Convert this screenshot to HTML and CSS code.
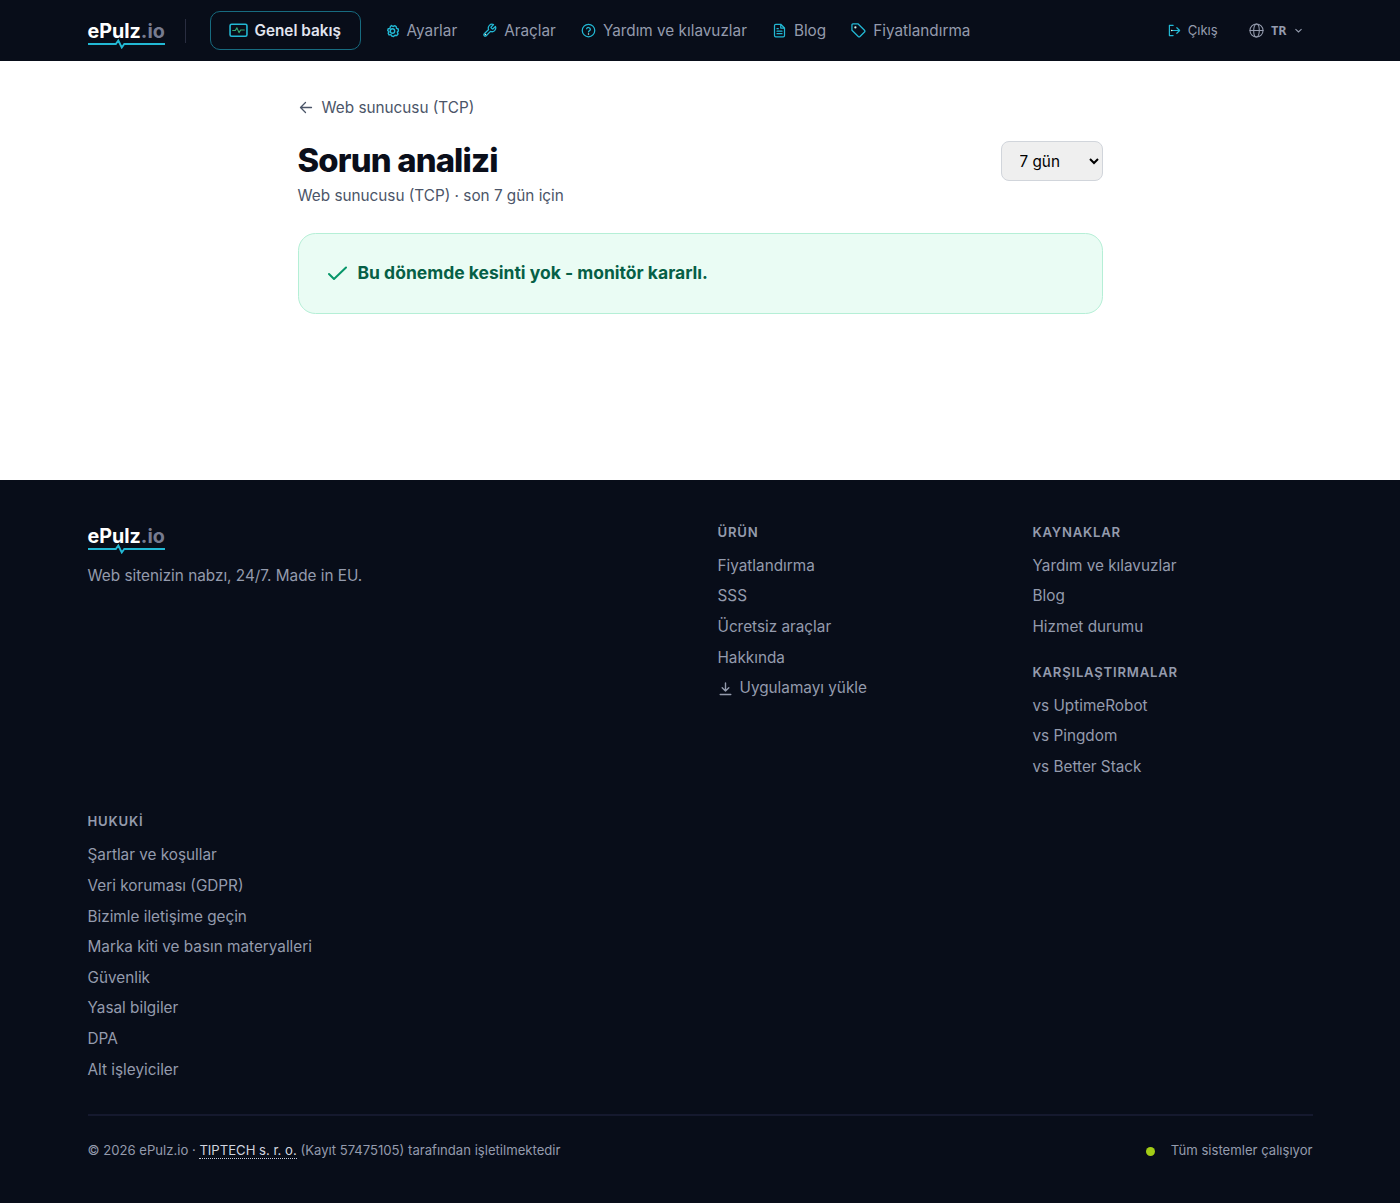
FILE: index.html
```html
<!DOCTYPE html>
<html lang="tr">

<head>
    <meta charset="UTF-8">
    <meta name="viewport" content="width=device-width, initial-scale=1.0">
    <title>Sorun analizi - ePulz.io</title>
    <link rel="stylesheet" href="styles.css">
</head>

<body>

    <!-- Header -->
    <header class="site-header">
        <div class="container header-inner">
            <a href="#" class="logo">
                <span class="logo-text">ePulz<span class="logo-tld">.io</span></span>
                <svg class="logo-pulse" viewBox="0 0 78 10"><path d="M0 5H28L30.500 1.500L34 8.500L36.500 5H78"/></svg>
            </a>
            <span class="divider"></span>
            <nav class="main-nav">
                <a href="#" class="nav-active">
                    <svg class="icon icon-monitor" viewBox="0 0 18 14"><rect x="1" y="1" width="16" height="11.500" rx="1.500"/><path class="beat" d="M3.500 7H6L7.500 4.500L9.500 9L11 6.500H14.500"/></svg>
                    <span>Genel bakış</span>
                </a>
                <a href="#" class="nav-settings">
                    <svg class="icon" viewBox="0 0 14 14"><path d="M5.500 1.500L7 2.500L9 1.700L10.300 2.700L10.500 4.300L12.200 5L12.400 7L11.300 8L12 10L10.700 11.600L9 11.200L7.500 12.500L5.700 12L5 10.700L3 10.900L2.200 9.200L3 7.800L1.700 6.500L2.200 4.800L4 4.500L4.300 2.700Z"/><circle cx="6.500" cy="7" r="2.200"/></svg>
                    <span>Ayarlar</span>
                </a>
                <a href="#">
                    <svg class="icon" viewBox="0 0 24 24"><path d="M14.700 6.300a1 1 0 0 0 0 1.400l1.600 1.600a1 1 0 0 0 1.400 0l3.800-3.800a6 6 0 0 1-7.900 7.900l-6.900 6.900a2.100 2.100 0 0 1-3-3l6.900-6.900a6 6 0 0 1 7.900-7.900z"/><circle class="dot" cx="5.500" cy="18.500" r="1.200"/></svg>
                    <span>Araçlar</span>
                </a>
                <a href="#">
                    <svg class="icon" viewBox="0 0 24 24"><circle cx="12" cy="12" r="10"/><path d="M9 9.200a3.100 3.100 0 0 1 6 1c0 2-3 2.300-3 4.100"/><circle class="dot" cx="12" cy="17.500" r="1.200"/></svg>
                    <span>Yardım ve kılavuzlar</span>
                </a>
                <a href="#">
                    <svg class="icon" viewBox="0 0 24 24"><path d="M14 2H6a2 2 0 0 0-2 2v16a2 2 0 0 0 2 2h12a2 2 0 0 0 2-2V8zM14 2v6h6M8 9h2M8 13h8M8 17h8"/></svg>
                    <span>Blog</span>
                </a>
                <a href="#">
                    <svg class="icon" viewBox="0 0 24 24"><path d="M21.600 14.400l-7.200 7.200a2 2 0 0 1-2.800 0L1.500 11.500V3a1.500 1.500 0 0 1 1.500-1.500H11.500l10.100 10.100a2 2 0 0 1 0 2.800z"/><circle class="dot" cx="7" cy="7" r="1.800"/></svg>
                    <span>Fiyatlandırma</span>
                </a>
            </nav>
            <div class="header-right">
                <a href="#" class="logout">
                    <svg class="icon" viewBox="0 0 14 14"><path d="M5.500 1.500H1.500V12.500H5.500M4 7H12.500M9.500 4L12.500 7L9.500 10"/><circle class="dot" cx="4" cy="7" r="0.900"/></svg>
                    <span>Çıkış</span>
                </a>
                <a href="#" class="language">
                    <svg class="icon" viewBox="0 0 24 24"><circle cx="12" cy="12" r="10.500"/><ellipse cx="12" cy="12" rx="4.500" ry="10.500"/><path d="M1.500 12h21"/></svg>
                    <span>TR</span>
                    <svg class="chevron" viewBox="0 0 8 8"><path d="M1.300 2.700L4 5.300L6.700 2.700"/></svg>
                </a>
            </div>
        </div>
    </header>

    <!-- Incident analysis -->
    <main class="page">
        <a href="#" class="back-link">
            <svg class="icon" viewBox="0 0 16 16"><path d="M13.500 7.500H2.500M7.500 2.500L2.500 7.500L7.500 12.500"/></svg>
            <span>Web sunucusu (TCP)</span>
        </a>
        <div class="page-head">
            <div>
                <h1>Sorun analizi</h1>
                <p class="subtitle">Web sunucusu (TCP) · son 7 gün için</p>
            </div>
            <select class="period" aria-label="Dönem">
                <option>7 gün</option>
            </select>
        </div>
        <div class="notice">
            <svg class="icon" viewBox="0 0 20 20"><path d="M1 10L6 15L18 3.500"/></svg>
            <strong>Bu dönemde kesinti yok - monitör kararlı.</strong>
        </div>
    </main>

    <!-- Footer -->
    <footer class="site-footer">
        <div class="container">
            <div class="footer-grid">
                <div class="brand">
                    <a href="#" class="logo">
                        <span class="logo-text">ePulz<span class="logo-tld">.io</span></span>
                        <svg class="logo-pulse" viewBox="0 0 78 10"><path d="M0 5H28L30.500 1.500L34 8.500L36.500 5H78"/></svg>
                    </a>
                    <p>Web sitenizin nabzı, 24/7. Made in EU.</p>
                </div>
                <div>
                    <h2>ÜRÜN</h2>
                    <ul>
                        <li><a href="#">Fiyatlandırma</a></li>
                        <li><a href="#">SSS</a></li>
                        <li><a href="#">Ücretsiz araçlar</a></li>
                        <li><a href="#">Hakkında</a></li>
                        <li><a href="#" class="install"><svg class="icon" viewBox="0 0 16 16"><path d="M7.500 2V10M4.200 6.800L7.500 10L10.800 6.800M2.200 13.500H12.800"/></svg>Uygulamayı yükle</a></li>
                    </ul>
                </div>
                <div>
                    <h2>KAYNAKLAR</h2>
                    <ul>
                        <li><a href="#">Yardım ve kılavuzlar</a></li>
                        <li><a href="#">Blog</a></li>
                        <li><a href="#">Hizmet durumu</a></li>
                    </ul>
                    <h2 class="compare">KARŞILAŞTIRMALAR</h2>
                    <ul>
                        <li><a href="#">vs UptimeRobot</a></li>
                        <li><a href="#">vs Pingdom</a></li>
                        <li><a href="#">vs Better Stack</a></li>
                    </ul>
                </div>
                <div>
                    <h2>HUKUKİ</h2>
                    <ul>
                        <li><a href="#">Şartlar ve koşullar</a></li>
                        <li><a href="#">Veri koruması (GDPR)</a></li>
                        <li><a href="#">Bizimle iletişime geçin</a></li>
                        <li><a href="#">Marka kiti ve basın materyalleri</a></li>
                        <li><a href="#">Güvenlik</a></li>
                        <li><a href="#">Yasal bilgiler</a></li>
                        <li><a href="#">DPA</a></li>
                        <li><a href="#">Alt işleyiciler</a></li>
                    </ul>
                </div>
            </div>
            <div class="footer-bottom">
                <p>© 2026 ePulz.io · <a href="#" class="company">TIPTECH s. r. o.</a> (Kayıt 57475105) tarafından işletilmektedir</p>
                <a href="#" class="status"><span class="status-dot"></span>Tüm sistemler çalışıyor</a>
            </div>
        </div>
    </footer>

</body>
</html>
```

FILE: styles.css
```css
/* General Reset */
* {
    margin: 0;
    padding: 0;
    box-sizing: border-box;
}

html {
    font-size: 17.5px;
}

body {
    font-family: Inter, sans-serif;
    line-height: 1.5;
    color: #0a0e1a;
    background-color: #fff;
}

a {
    color: inherit;
    text-decoration: none;
}

ul {
    list-style: none;
}

.container {
    width: 70rem;
    margin: 0 auto;
}

.icon {
    display: block;
    width: 15px;
    height: 15px;
    flex: none;
    fill: none;
    stroke: currentColor;
    stroke-width: 2;
    stroke-linecap: round;
    stroke-linejoin: round;
}

/* Header */
.site-header {
    height: 61px;
    background-color: #080d19;
    color: #949bad;
}

.header-inner {
    display: flex;
    align-items: center;
    height: 61px;
}

.logo {
    display: flex;
    flex-direction: column;
    width: 78px;
}

.header-inner .logo {
    padding-top: 6px;
}

.logo-text {
    font-size: 19.7px;
    font-weight: 700;
    line-height: 24px;
    color: #fff;
}

.logo-tld {
    color: #777b8f;
}

.logo-pulse {
    width: 77.5px;
    height: 10px;
    margin-top: -4px;
    fill: none;
    stroke: #22b8d4;
    stroke-width: 1.9;
}

.divider {
    width: 1px;
    height: 24px;
    margin: 0 24px 0 19px;
    background-color: #292d40;
}

.main-nav {
    display: flex;
    align-items: center;
    gap: 25px;
    font-size: 0.875rem;
    line-height: 24px;
}

.main-nav a {
    display: flex;
    align-items: center;
    gap: 7px;
    white-space: nowrap;
}

.main-nav span {
    padding-top: 1px;
}

.main-nav .icon {
    color: #22b8d4;
}

.main-nav .nav-active {
    width: 151px;
    height: 39px;
    padding-left: 18px;
    border: 1px solid #176b80;
    border-radius: 10px;
    font-weight: 600;
    color: #e2e5f0;
}

.main-nav .icon-monitor {
    width: 19px;
    height: 15px;
    stroke-width: 1.5;
}

.icon .beat {
    stroke: #35a873;
    stroke-width: 1.1;
}

.icon .dot {
    fill: #d8f4e8;
    stroke: none;
}

.main-nav .nav-settings .icon {
    width: 14px;
    height: 14px;
    stroke-width: 1.4;
}

.header-right {
    display: flex;
    align-items: center;
    margin-left: auto;
    font-size: 0.75rem;
}

.logout,
.language {
    display: flex;
    align-items: center;
    gap: 7px;
}

.logout .icon {
    width: 13px;
    height: 13px;
    stroke-width: 1.3;
    color: #22b8d4;
}

.language {
    margin: 0 10px 0 31px;
    font-family: "DejaVu Sans Mono", monospace;
    font-size: 0.75rem;
    font-weight: 700;
}

.language .icon {
    stroke-width: 1.7;
}

.chevron {
    width: 9px;
    height: 9px;
    fill: none;
    stroke: currentColor;
}

/* Page content */
.page {
    width: 46rem;
    height: 419px;
    margin: 0 auto;
    padding-top: 35px;
}

.back-link {
    display: flex;
    align-items: center;
    gap: 8px;
    height: 24px;
    font-size: 0.875rem;
    color: #4b5568;
}

.back-link .icon {
    width: 16px;
    height: 16px;
    stroke-width: 1.3;
}

.page-head {
    display: flex;
    justify-content: space-between;
    margin-top: 20px;
}

h1 {
    font-size: 1.875rem;
    font-weight: 800;
    line-height: 41px;
    letter-spacing: -0.025em;
}

.subtitle {
    margin-top: 3px;
    font-size: 0.875rem;
    line-height: 24px;
    color: #4b5568;
}

.period {
    width: 102px;
    height: 40px;
    margin-top: 1px;
    padding: 0 2px 0 14px;
    border: 1px solid #d1d5db;
    border-radius: 8px;
    background-color: #efefef;
    font-family: inherit;
    font-size: 0.875rem;
    color: #000;
}

.notice {
    display: flex;
    align-items: center;
    gap: 10px;
    height: 81px;
    margin-top: 25px;
    padding: 0 29px;
    border: 1px solid #b5efd6;
    border-radius: 17.5px;
    background-color: #eafcf4;
    font-size: 1rem;
    color: #065f46;
}

.notice strong {
    font-weight: 700;
}

.notice .icon {
    width: 20px;
    height: 20px;
    color: #079669;
}

/* Footer */
.site-footer {
    height: 723px;
    padding-top: 42px;
    background-color: #080d19;
    color: #949bad;
}

.footer-grid {
    display: grid;
    grid-template-columns: repeat(4, 1fr);
    column-gap: 2rem;
    row-gap: 29px;
}

.brand {
    grid-column: span 2;
    padding-top: 2px;
}

.brand p {
    margin-top: 10px;
    font-size: 0.875rem;
    line-height: 24px;
}

.site-footer h2 {
    margin-bottom: 8.8px;
    font-size: 0.75rem;
    font-weight: 600;
    line-height: 20px;
    letter-spacing: 0.06em;
}

.site-footer h2.compare {
    margin-top: 19px;
}

.site-footer li {
    height: 30.65px;
    font-size: 0.875rem;
    line-height: 30.65px;
}

.install {
    display: flex;
    align-items: center;
    gap: 6px;
}

.install .icon {
    width: 16px;
    height: 16px;
    stroke-width: 1.4;
}

.footer-bottom {
    display: flex;
    align-items: center;
    justify-content: space-between;
    margin-top: 29px;
    padding-top: 24px;
    border-top: 2px solid #15192e;
    font-size: 0.75rem;
    line-height: 20px;
}

.company {
    border-bottom: 1px dotted #c8ccda;
    color: #d0d4df;
}

.status {
    display: flex;
    align-items: center;
    gap: 16px;
}

.status-dot {
    width: 9px;
    height: 9px;
    margin-top: 2px;
    border-radius: 50%;
    background-color: #a3cc16;
}
```
